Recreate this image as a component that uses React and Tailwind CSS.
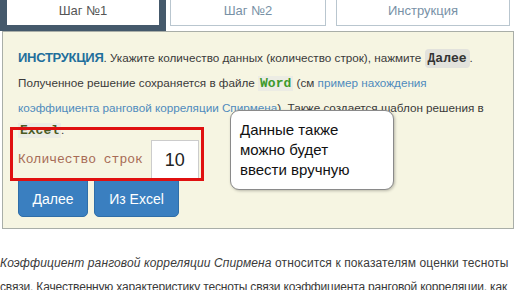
export default function App() {
  return (
    <div className="relative w-[516px] h-[290px] overflow-hidden bg-white font-['Liberation_Sans',Arial,sans-serif]">
      {/* tabs */}
      <div className="flex items-start h-[31px]">
        <div className="w-[166px] h-[31px] bg-[#45596b] px-[7px] pb-[6px]">
          <div className="h-full bg-white flex items-center justify-center pb-[4px] text-[13px] text-[#555]">Шаг №1</div>
        </div>
        <div className="ml-[4px] w-[156px] h-[26px] border border-t-0 border-[#b9c6cf] flex items-center justify-center pb-[4px] text-[13px] text-[#7891a6]">Шаг №2</div>
        <div className="ml-[10px] w-[174px] h-[26px] border border-t-0 border-[#b9c6cf] flex items-center justify-center pb-[4px] text-[13px] text-[#7891a6]">Инструкция</div>
      </div>

      {/* panel */}
      <div className="ml-[2px] w-[512px] h-[198px] border border-[#a9aea8] bg-[#f6f5e2] px-[15px] pt-[14px] text-[11.7px] leading-[24px] text-[#3a3a3a] whitespace-nowrap">
        <div>
          <span className="font-bold text-[13px] text-[#1f6f9c] tracking-[-0.3px]">ИНСТРУКЦИЯ</span>. Укажите количество данных (количество строк), нажмите{" "}
          <span className="bg-[#e2e2dc] px-[3px] py-[2px] rounded-sm font-['Liberation_Mono',monospace] font-bold text-[13px] text-[#333]">Далее</span>.
        </div>
        <div>
          Полученное решение сохраняется в файле{" "}
          <span className="bg-[#ecece4] px-[2px] font-['Liberation_Mono',monospace] font-bold text-[13px] text-[#3d9a2c]">Word</span>{" "}
          (см <span className="text-[#4f8bbd]">пример нахождения</span>
        </div>
        <div>
          <span className="text-[#4f8bbd]">коэффициента ранговой корреляции Спирмена</span>). Также создается шаблон решения в
        </div>
        <div className="h-[20px] leading-[20px]">
          <span className="bg-[#ecece4] px-[2px] font-['Liberation_Mono',monospace] font-bold text-[13px] text-[#4b5a24]">Excel</span>.
        </div>
        <div className="flex items-center">
          <span className="font-['Liberation_Mono',monospace] text-[13px] text-[#a76b55]">Количество строк</span>
          <div className="ml-[8px] w-[48px] h-[40px] bg-white border border-[#ccc] flex items-center justify-center text-[18px] text-[#222]">10</div>
        </div>
        <div className="flex gap-[6px]">
          <button className="w-[70px] h-[37px] rounded-b-[5px] bg-[#3a7fc0] border border-[#2f6ea8] text-white text-[14px]">Далее</button>
          <button className="w-[85px] h-[37px] rounded-b-[5px] bg-[#3a7fc0] border border-[#2f6ea8] text-white text-[14px]">Из Excel</button>
        </div>
      </div>

      {/* article text */}
      <div className="mt-[22px] text-[12px] leading-[24px] text-[#3a3a3a] whitespace-nowrap">
        <div className="tracking-[0.12px]">
          <i>Коэффициент ранговой корреляции Спирмена</i> относится к показателям оценки тесноты
        </div>
        <div className="tracking-[-0.18px]">связи. Качественную характеристику тесноты связи коэффициента ранговой корреляции, как</div>
      </div>

      {/* annotations */}
      <div className="absolute left-[10px] top-[127px] w-[194px] h-[54px] border-[3px] border-[#e01010]" />
      <div className="absolute left-[230px] top-[110px] w-[164px] h-[80px] rounded-[9px] border border-[#8a8a8a] bg-white shadow-[1px_1px_3px_rgba(0,0,0,0.25)] pl-[9px] pt-[9px] text-[15px] leading-[20px] text-[#111]">
        <div>Данные также</div>
        <div>можно будет</div>
        <div>ввести вручную</div>
      </div>
    </div>
  );
}
